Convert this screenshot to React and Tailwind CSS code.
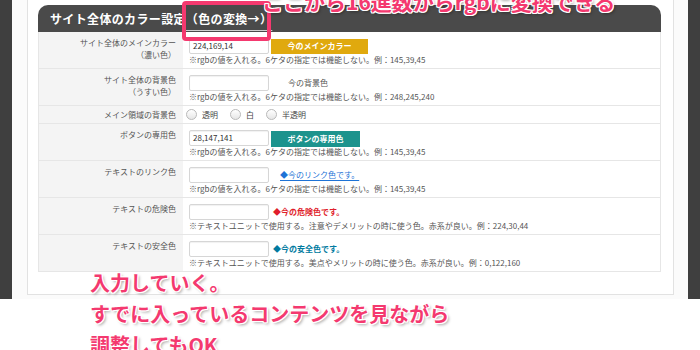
import React from "react";

const PINK = "text-[#f4396f]";
const OUTLINE =
  "[text-shadow:1px_1px_0_#fff,-1px_-1px_0_#fff,1px_-1px_0_#fff,-1px_1px_0_#fff,0_1px_0_#fff,1px_0_0_#fff,2px_2px_3px_rgba(0,0,0,0.35)]";

function Field({ value }) {
  return (
    <div className="flex h-[16px] w-[80px] shrink-0 items-center rounded-[2px] border border-[#d6d6d6] bg-white pl-[3px] text-[8px] text-[#333] shadow-[inset_0_1px_1px_rgba(0,0,0,0.06)]">
      {value}
    </div>
  );
}

function Note({ children }) {
  return <div className="text-[8px] leading-[12px] text-[#555]">{children}</div>;
}

function Row({ label, children }) {
  return (
    <div className="flex border-b border-[#e6e6e6]">
      <div className="w-[144px] shrink-0 bg-[#f4f4f4] pr-[7px] pt-[5px] text-right text-[8px] leading-[12px] text-[#555]">
        {label}
      </div>
      <div className="flex-1 bg-white pb-[2px] pl-[6px] pt-[6px]">{children}</div>
    </div>
  );
}

function Radio({ label, className = "" }) {
  return (
    <div className={"flex items-center gap-[5px] " + className}>
      <span className="h-[11px] w-[11px] rounded-full border border-[#b9b9b9] bg-gradient-to-b from-white to-[#e6e6e6]" />
      <span className="text-[8px] text-[#444]">{label}</span>
    </div>
  );
}

const RGB_NOTE = "※rgbの値を入れる。6ケタの指定では機能しない。例：";

export default function App() {
  return (
    <div className="relative h-[350px] w-[700px] overflow-hidden bg-white font-['Noto_Sans_CJK_JP','Noto_Sans',sans-serif]">
      {/* screenshot frame */}
      <div className="h-[299px] bg-[#3f3f3f] px-[12px]">
        <div className="h-full bg-[#fbfbfb] pb-[4px] pl-[15px] pr-[14px]">
          <div className="h-full border-x border-b border-[#e2e2e2] bg-white pl-[10px] pr-[12px] pt-[5px]">
            <div className="flex h-[27px] items-center rounded-t-[10px] bg-[#4a4a4a] pl-[12px] text-[12px] font-bold tracking-[0.35px] text-white">
              サイト全体のカラー設定
              <span className="underline decoration-[#cfcfcf] underline-offset-[6px]">（色の変換→）</span>
            </div>

            <div className="border-x border-[#e6e6e6]">
              <Row
                label={
                  <>
                    サイト全体のメインカラー
                    <br />
                    （濃い色）
                  </>
                }
              >
                <div className="flex h-[16px] items-center gap-[2px]">
                  <Field value="224,169,14" />
                  <div className="flex h-[15px] w-[97px] items-center justify-center bg-[#e0a90e] text-[8px] font-bold text-white">
                    今のメインカラー
                  </div>
                </div>
                <Note>{RGB_NOTE}145,39,45</Note>
              </Row>

              <Row
                label={
                  <>
                    サイト全体の背景色
                    <br />
                    （うすい色）
                  </>
                }
              >
                <div className="flex h-[16px] items-center">
                  <Field value="" />
                  <span className="ml-[19px] text-[8px] text-[#555]">今の背景色</span>
                </div>
                <Note>{RGB_NOTE}248,245,240</Note>
              </Row>

              <div className="flex h-[18px] border-b border-[#e6e6e6]">
                <div className="flex w-[144px] shrink-0 items-center justify-end bg-[#f4f4f4] pr-[7px] text-[8px] text-[#555]">
                  メイン領域の背景色
                </div>
                <div className="flex flex-1 items-center pl-[3px]">
                  <Radio label="透明" />
                  <Radio label="白" className="ml-[12px]" />
                  <Radio label="半透明" className="ml-[12px]" />
                </div>
              </div>

              <Row label="ボタンの専用色">
                <div className="flex h-[16px] items-start gap-[2px]">
                  <Field value="28,147,141" />
                  <div className="mt-[1px] flex h-[16px] w-[89px] items-center justify-center bg-[#1c938d] text-[8px] font-bold text-white">
                    ボタンの専用色
                  </div>
                </div>
                <Note>{RGB_NOTE}145,39,45</Note>
              </Row>

              <Row label="テキストのリンク色">
                <div className="flex h-[16px] items-center">
                  <Field value="" />
                  <span className="ml-[11px] text-[8px] text-[#1e73d6] underline underline-offset-2">
                    ◆今のリンク色です。
                  </span>
                </div>
                <Note>{RGB_NOTE}145,39,45</Note>
              </Row>

              <Row label="テキストの危険色">
                <div className="flex h-[16px] items-center">
                  <Field value="" />
                  <span className="ml-[4px] text-[8px] font-bold text-[#e01e2c]">◆今の危険色です。</span>
                </div>
                <Note>※テキストユニットで使用する。注意やデメリットの時に使う色。赤系が良い。例：224,30,44</Note>
              </Row>

              <Row label="テキストの安全色">
                <div className="flex h-[16px] items-center">
                  <Field value="" />
                  <span className="ml-[4px] text-[8px] font-bold text-[#007aa0]">◆今の安全色です。</span>
                </div>
                <Note>※テキストユニットで使用する。美点やメリットの時に使う色。赤系が良い。例：0,122,160</Note>
              </Row>
            </div>
          </div>
        </div>
      </div>

      {/* annotations */}
      <div className="absolute left-[182px] top-[1px] h-[40px] w-[89px] rounded-[4px] border-[4px] border-[#f4396f]" />
      <div
        className={
          "absolute left-[262px] top-[-9px] whitespace-nowrap text-[21px] font-bold leading-none " + PINK + " " + OUTLINE
        }
      >
        ここから16進数からrgbに変換できる
      </div>
      <div
        className={
          "absolute left-[90px] top-[267px] whitespace-nowrap text-[20px] font-bold leading-[31px] " + PINK + " " + OUTLINE
        }
      >
        入力していく。
        <br />
        すでに入っているコンテンツを見ながら
        <br />
        調整してもOK
      </div>
    </div>
  );
}
